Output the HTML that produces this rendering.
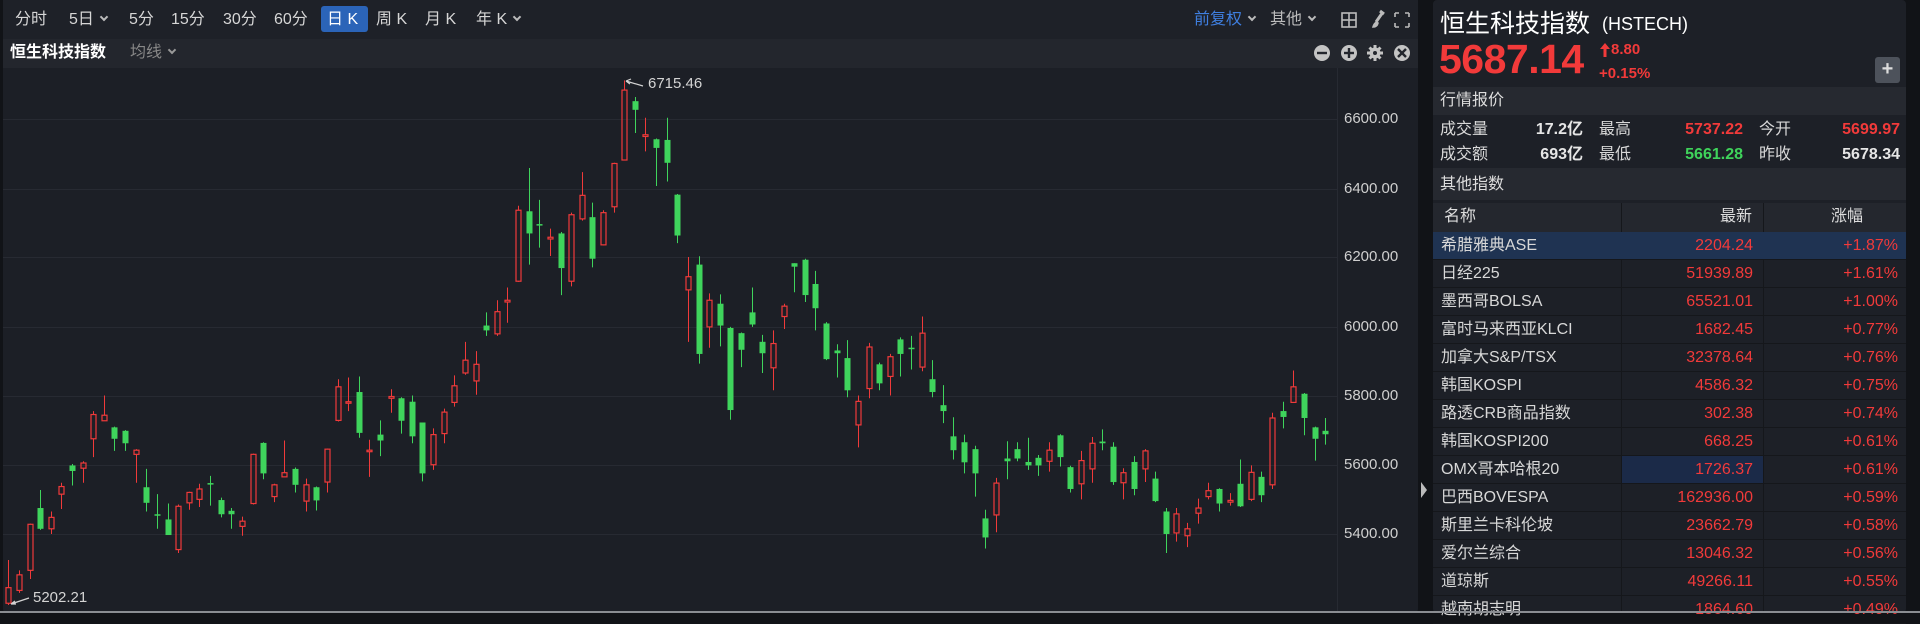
<!DOCTYPE html>
<html><head><meta charset="utf-8">
<style>
*{margin:0;padding:0;box-sizing:border-box}
body{width:1920px;height:613px;background:#111317;overflow:hidden;position:relative;font-family:"Liberation Sans","Noto Sans CJK SC",sans-serif;color:#d8d8d8}
.a{position:absolute;white-space:nowrap;line-height:20px}
#left{position:absolute;left:3px;top:0;width:1415px;height:613px;background:#1c1f26;border-radius:4px}
#tb{position:absolute;left:0;top:0;width:1415px;height:39px;background:#1e2128}
#r2{position:absolute;left:0;top:39px;width:1415px;height:29px;background:#23262d}
.tb{font-size:16px;color:#d6d6d6;top:10px}
.chev{display:inline-block;width:6px;height:6px;border-right:2px solid #bbb;border-bottom:2px solid #bbb;transform:rotate(45deg);margin-left:7px;position:relative;top:-4px}
#right{position:absolute;left:1433px;top:0;width:473px;height:613px;background:#1d2027;border-radius:4px}
.band{position:absolute;left:0;width:473px;background:#262930}
.red{color:#f23a3a}.grn{color:#3fd35b}
.row{position:absolute;left:0;width:473px;height:28px;border-bottom:1px solid #15171b;font-size:16px;line-height:27px}
.row .n{position:absolute;left:8px;top:0;color:#d8d8d8}
.row .p{position:absolute;right:153px;top:0;color:#f23a3a}
.row .c{position:absolute;right:8px;top:0;color:#f23a3a}
</style></head><body>
<div id="left">
<div id="tb"></div>
<div id="r2"></div>
<div class="a" style="left:318px;top:6px;width:47px;height:26px;background:#2b64b8;border-radius:3px"></div>
<div class="a tb" style="left:12px">分时</div>
<div class="a tb" style="left:66px">5日<span class="chev"></span></div>
<div class="a tb" style="left:126px">5分</div>
<div class="a tb" style="left:168px">15分</div>
<div class="a tb" style="left:220px">30分</div>
<div class="a tb" style="left:271px">60分</div>
<div class="a tb" style="left:324px;color:#fff">日 K</div>
<div class="a tb" style="left:373px">周 K</div>
<div class="a tb" style="left:422px">月 K</div>
<div class="a tb" style="left:473px">年 K<span class="chev"></span></div>
<div class="a tb" style="left:1191px;color:#3f7fe0">前复权<span class="chev"></span></div>
<div class="a tb" style="left:1267px;color:#bbb">其他<span class="chev"></span></div>
<div class="a" style="left:7px;top:43px;font-size:16px;font-weight:bold;color:#fff">恒生科技指数</div>
<div class="a" style="left:127px;top:43px;font-size:16px;color:#888">均线<span class="chev" style="border-color:#999"></span></div>
<svg class="a" style="left:0;top:0" width="1415" height="70">
<g fill="none" stroke="#bbb" stroke-width="1.6">
<rect x="1339" y="13" width="14" height="14"/><line x1="1346" y1="13" x2="1346" y2="27"/><line x1="1339" y1="20" x2="1353" y2="20"/>
<path d="M1380 12 L1373 22 M1377 11 l4 3" stroke-width="3"/>
<path d="M1370 27 q2 -6 5 -4 q-1 4 -5 4z" fill="#bbb"/>
<path d="M1392 13 h4 M1392 13 v4 M1406 13 h-4 M1406 13 v4 M1392 27 h4 M1392 27 v-4 M1406 27 h-4 M1406 27 v-4"/>
</g>
<g fill="#c4c4c4">
<circle cx="1319" cy="53" r="8"/><circle cx="1346" cy="53" r="8"/><circle cx="1399" cy="53" r="8"/>
<circle cx="1372" cy="53" r="5.5"/>
</g>
<g stroke="#23262d" stroke-width="2.4" fill="none">
<line x1="1314" y1="53" x2="1324" y2="53"/><line x1="1341" y1="53" x2="1351" y2="53"/><line x1="1346" y1="48" x2="1346" y2="58"/>
<line x1="1395" y1="49" x2="1403" y2="57"/><line x1="1403" y1="49" x2="1395" y2="57"/>
</g>
<g stroke="#c4c4c4" stroke-width="3"><line x1="1372" y1="45" x2="1372" y2="61"/><line x1="1364" y1="53" x2="1380" y2="53"/><line x1="1366.5" y1="47.5" x2="1377.5" y2="58.5"/><line x1="1377.5" y1="47.5" x2="1366.5" y2="58.5"/></g>
<circle cx="1372" cy="53" r="2" fill="#23262d"/>
</svg>
<svg id="ch" class="a" style="left:0;top:68px" width="1415" height="545"></svg>
<div class="a" style="left:1341px;top:109px;font-size:15px;color:#cfcfcf">6600.00</div>
<div class="a" style="left:1341px;top:179px;font-size:15px;color:#cfcfcf">6400.00</div>
<div class="a" style="left:1341px;top:247px;font-size:15px;color:#cfcfcf">6200.00</div>
<div class="a" style="left:1341px;top:317px;font-size:15px;color:#cfcfcf">6000.00</div>
<div class="a" style="left:1341px;top:386px;font-size:15px;color:#cfcfcf">5800.00</div>
<div class="a" style="left:1341px;top:455px;font-size:15px;color:#cfcfcf">5600.00</div>
<div class="a" style="left:1341px;top:524px;font-size:15px;color:#cfcfcf">5400.00</div>
<div class="a" style="left:645px;top:74px;font-size:15px;color:#d4d4d4">6715.46</div>
<div class="a" style="left:30px;top:588px;font-size:15px;color:#d4d4d4">5202.21</div>
</div>
<svg class="a" style="left:1419px;top:480px" width="10" height="20"><path d="M2 2 L8 10 L2 18Z" fill="#bbb"/></svg>
<div id="right">
<div class="a" style="left:7px;top:10px;font-size:25px;line-height:28px;color:#fff">恒生科技指数</div>
<div class="a" style="left:169px;top:14px;font-size:18px;color:#fff">(HSTECH)</div>
<div class="a red" style="left:6px;top:36px;font-size:41px;line-height:46px;font-weight:bold;letter-spacing:-0.5px">5687.14</div>
<svg class="a" style="left:166px;top:41px" width="12" height="18"><path d="M6 2 L11 8 H7.5 V16 H4.5 V8 H1Z" fill="#f23a3a"/></svg>
<div class="a red" style="left:178px;top:40px;font-size:15px;font-weight:bold">8.80</div>
<div class="a red" style="left:166px;top:64px;font-size:15px;font-weight:bold">+0.15%</div>
<div class="a" style="left:442px;top:57px;width:25px;height:26px;background:#4d525b;border-radius:3px;color:#ddd;font-size:20px;font-weight:bold;text-align:center;line-height:25px">+</div>
<div class="band" style="top:87px;height:28px"></div>
<div class="a" style="left:7px;top:91px;font-size:16px;color:#ddd">行情报价</div>
<div class="a" style="left:7px;top:120px;font-size:16px">成交量</div>
<div class="a" style="right:323px;top:120px;font-size:16px;font-weight:bold;color:#e6e6e6">17.2亿</div>
<div class="a" style="left:166px;top:120px;font-size:16px">最高</div>
<div class="a red" style="right:163px;top:120px;font-size:16px;font-weight:bold">5737.22</div>
<div class="a" style="left:326px;top:120px;font-size:16px">今开</div>
<div class="a red" style="right:6px;top:120px;font-size:16px;font-weight:bold">5699.97</div>
<div class="a" style="left:7px;top:145px;font-size:16px">成交额</div>
<div class="a" style="right:323px;top:145px;font-size:16px;font-weight:bold;color:#e6e6e6">693亿</div>
<div class="a" style="left:166px;top:145px;font-size:16px">最低</div>
<div class="a grn" style="right:163px;top:145px;font-size:16px;font-weight:bold">5661.28</div>
<div class="a" style="left:326px;top:145px;font-size:16px">昨收</div>
<div class="a" style="right:6px;top:145px;font-size:16px;font-weight:bold;color:#e6e6e6">5678.34</div>
<div class="band" style="top:168px;height:32px"></div>
<div class="a" style="left:7px;top:175px;font-size:16px;color:#ddd">其他指数</div>
<div class="band" style="top:203px;height:29px;background:#24272e"></div>
<div class="a" style="left:11px;top:207px;font-size:16px;color:#ddd">名称</div>
<div class="a" style="right:154px;top:207px;font-size:16px;color:#ddd">最新</div>
<div class="a" style="right:43px;top:207px;font-size:16px;color:#ddd">涨幅</div>
<div class="a" style="left:188px;top:203px;width:1px;height:410px;background:#15171b"></div>
<div class="a" style="left:330px;top:203px;width:1px;height:410px;background:#15171b"></div>
<div id="rows"></div>
</div>
<script>
var D=[
[1,1415,1495,1540,1545],[1,1445,1458,1503,1510],[1,1310,1312,1445,1470],[0,1213,1265,1325,1328],[1,1275,1292,1325,1340],[1,1192,1203,1225,1268],[0,1138,1142,1158,1200],[1,1130,1135,1150,1192],[1,985,995,1065,1118],[1,940,997,1013,1013],
[0,1030,1032,1065,1100],[0,1040,1042,1078,1100],[1,1095,1098,1110,1192],[0,1152,1205,1250,1275],[0,1225,1283,1287,1325],[0,1252,1298,1343,1343],[1,1255,1260,1385,1395],[1,1218,1220,1250,1270],[1,1195,1210,1240,1262],[0,1172,1193,1197,1258],
[0,1235,1242,1283,1292],[0,1265,1273,1283,1325],[1,1290,1303,1318,1345],[1,1108,1110,1252,1255],[0,1075,1077,1165,1182],[1,1195,1198,1232,1248],[1,1070,1163,1175,1175],[0,1148,1152,1198,1220],[1,1180,1198,1245,1275],[0,1203,1205,1243,1272],
[1,1093,1095,1190,1220],[1,893,915,1012,1015],[1,888,958,962,985],[0,885,930,1048,1062],[1,1068,1098,1102,1175],[0,1012,1053,1070,1115],[1,922,943,948,990],[0,945,948,1013,1050],[0,940,958,1058,1078],[0,1018,1018,1165,1188],
[1,1035,1053,1140,1155],[1,978,988,1050,1078],[1,882,912,960,972],[1,785,838,875,880],[1,812,850,898,938],[0,700,738,752,768],[1,665,698,762,768],[1,628,665,670,730],[1,392,405,610,612],[0,283,408,472,562],
[0,375,445,448,513],[1,458,483,488,537],[0,468,472,572,650],[1,412,418,610,625],[1,295,362,430,435],[0,383,425,545,570],[1,405,412,505,507],[1,268,270,395,412],[1,30,58,260,260],[0,78,90,115,182],
[1,138,187,192,235],[0,198,200,225,335],[0,138,202,268,322],[0,358,360,478,500],[1,540,597,635,785],[0,538,562,820,848],[1,645,665,742,802],[0,648,675,738,798],[0,742,745,982,1010],[0,758,760,808,858],
[0,628,700,735,742],[0,765,785,818,875],[1,752,790,860,925],[1,675,682,712,748],[0,558,558,568,642],[0,545,548,650,670],[0,580,618,688,752],[0,728,732,835,838],[0,792,810,818,888],[0,780,832,925,945],
[1,940,957,1025,1090],[1,788,800,920,948],[0,845,850,905,925],[1,820,828,885,940],[0,772,778,820,885],[0,768,802,806,865],[1,712,760,858,870],[0,838,893,930,945],[0,910,968,985,1020],[0,1003,1058,1098,1125],
[0,1053,1075,1133,1165],[0,1085,1095,1165,1232],[0,1270,1295,1350,1382],[1,1178,1193,1285,1335],[0,1072,1122,1130,1182],[0,1075,1095,1122,1130],[0,1062,1132,1142,1155],[0,1112,1120,1142,1172],[1,1075,1098,1130,1160],[0,1052,1055,1118,1145],
[0,1143,1147,1210,1220],[1,1100,1128,1195,1240],[1,1060,1078,1152,1192],[0,1038,1073,1078,1098],[0,1075,1088,1190,1198],[1,1150,1163,1192,1240],[0,1115,1132,1210,1228],[1,1095,1100,1152,1190],[0,1160,1180,1245,1248],[0,1265,1275,1340,1395],
[1,1265,1282,1337,1362],[1,1308,1325,1345,1378],[1,1238,1265,1280,1310],[1,1192,1215,1232,1240],[0,1208,1210,1252,1275],[1,1222,1243,1248,1258],[0,1125,1195,1260,1262],[1,1142,1162,1240,1245],[0,1160,1175,1228,1248],[1,990,1005,1198,1210],
[0,958,985,1002,1035],[1,868,915,960,960],[0,933,935,1005,1055],[0,1030,1032,1065,1128],[0,1005,1042,1052,1082]];
var s='';
[119,189,257,327,396,465,534].forEach(function(g){s+='<line x1="0" x2="1334" y1="'+(g-68+.5)+'" y2="'+(g-68+.5)+'" stroke="#272a32" stroke-width="1"/>';});
s+='<line x1="1334.5" x2="1334.5" y1="0" y2="545" stroke="#272a32"/>';
function Y(z){return 70+z/2.888-68;}
D.forEach(function(d,i){
 var x=8.3+i*10.62-3, cx=Math.round(x)+0.5;
 var col=d[0]?'#f03a3a':'#3fd45c';
 var hi=Y(d[1]),t=Y(d[2]),b=Y(d[3]),lo=Y(d[4]);
 if(b-t<1.5){b=t+1.5;}
 if(d[0]){
  s+='<line x1="'+cx+'" x2="'+cx+'" y1="'+hi+'" y2="'+t+'" stroke="'+col+'"/>';
  s+='<line x1="'+cx+'" x2="'+cx+'" y1="'+b+'" y2="'+lo+'" stroke="'+col+'"/>';
  s+='<rect x="'+(cx-2.5)+'" y="'+t+'" width="5" height="'+(b-t)+'" fill="none" stroke="'+col+'" stroke-width="1.2"/>';
 }else{
  s+='<line x1="'+cx+'" x2="'+cx+'" y1="'+hi+'" y2="'+lo+'" stroke="'+col+'"/>';
  s+='<rect x="'+(cx-3)+'" y="'+t+'" width="6" height="'+(b-t)+'" fill="'+col+'"/>';
 }
});
s+='<path d="M623 13 L640 18 M623 13 l5 -2 M623 13 l4 3" stroke="#d4d4d4" stroke-width="1.2" fill="none"/>';
s+='<path d="M8 536 L26 530 M8 536 l5 0 M8 536 l4 -3" stroke="#d4d4d4" stroke-width="1.2" fill="none"/>';
document.getElementById('ch').innerHTML=s;
var R=[["希腊雅典ASE","2204.24","+1.87%"],["日经225","51939.89","+1.61%"],["墨西哥BOLSA","65521.01","+1.00%"],["富时马来西亚KLCI","1682.45","+0.77%"],["加拿大S&amp;P/TSX","32378.64","+0.76%"],["韩国KOSPI","4586.32","+0.75%"],["路透CRB商品指数","302.38","+0.74%"],["韩国KOSPI200","668.25","+0.61%"],["OMX哥本哈根20","1726.37","+0.61%"],["巴西BOVESPA","162936.00","+0.59%"],["斯里兰卡科伦坡","23662.79","+0.58%"],["爱尔兰综合","13046.32","+0.56%"],["道琼斯","49266.11","+0.55%"],["越南胡志明","1864.60","+0.49%"]];
var h='';
R.forEach(function(r,i){
 var bg=i==0?'background:#1f3352;':'';
 h+='<div class="row" style="top:'+(232+i*28)+'px;'+bg+'">'+(i==8?'<div class="a" style="left:189px;top:0;width:141px;height:27px;background:#1b2a48"></div>':'')+'<span class="n">'+r[0]+'</span><span class="p">'+r[1]+'</span><span class="c">'+r[2]+'</span></div>';
});
document.getElementById('rows').innerHTML=h;
</script>
<div class="a" style="left:0;top:611px;width:1920px;height:2px;background:#8a8d92"></div>
</body></html>
